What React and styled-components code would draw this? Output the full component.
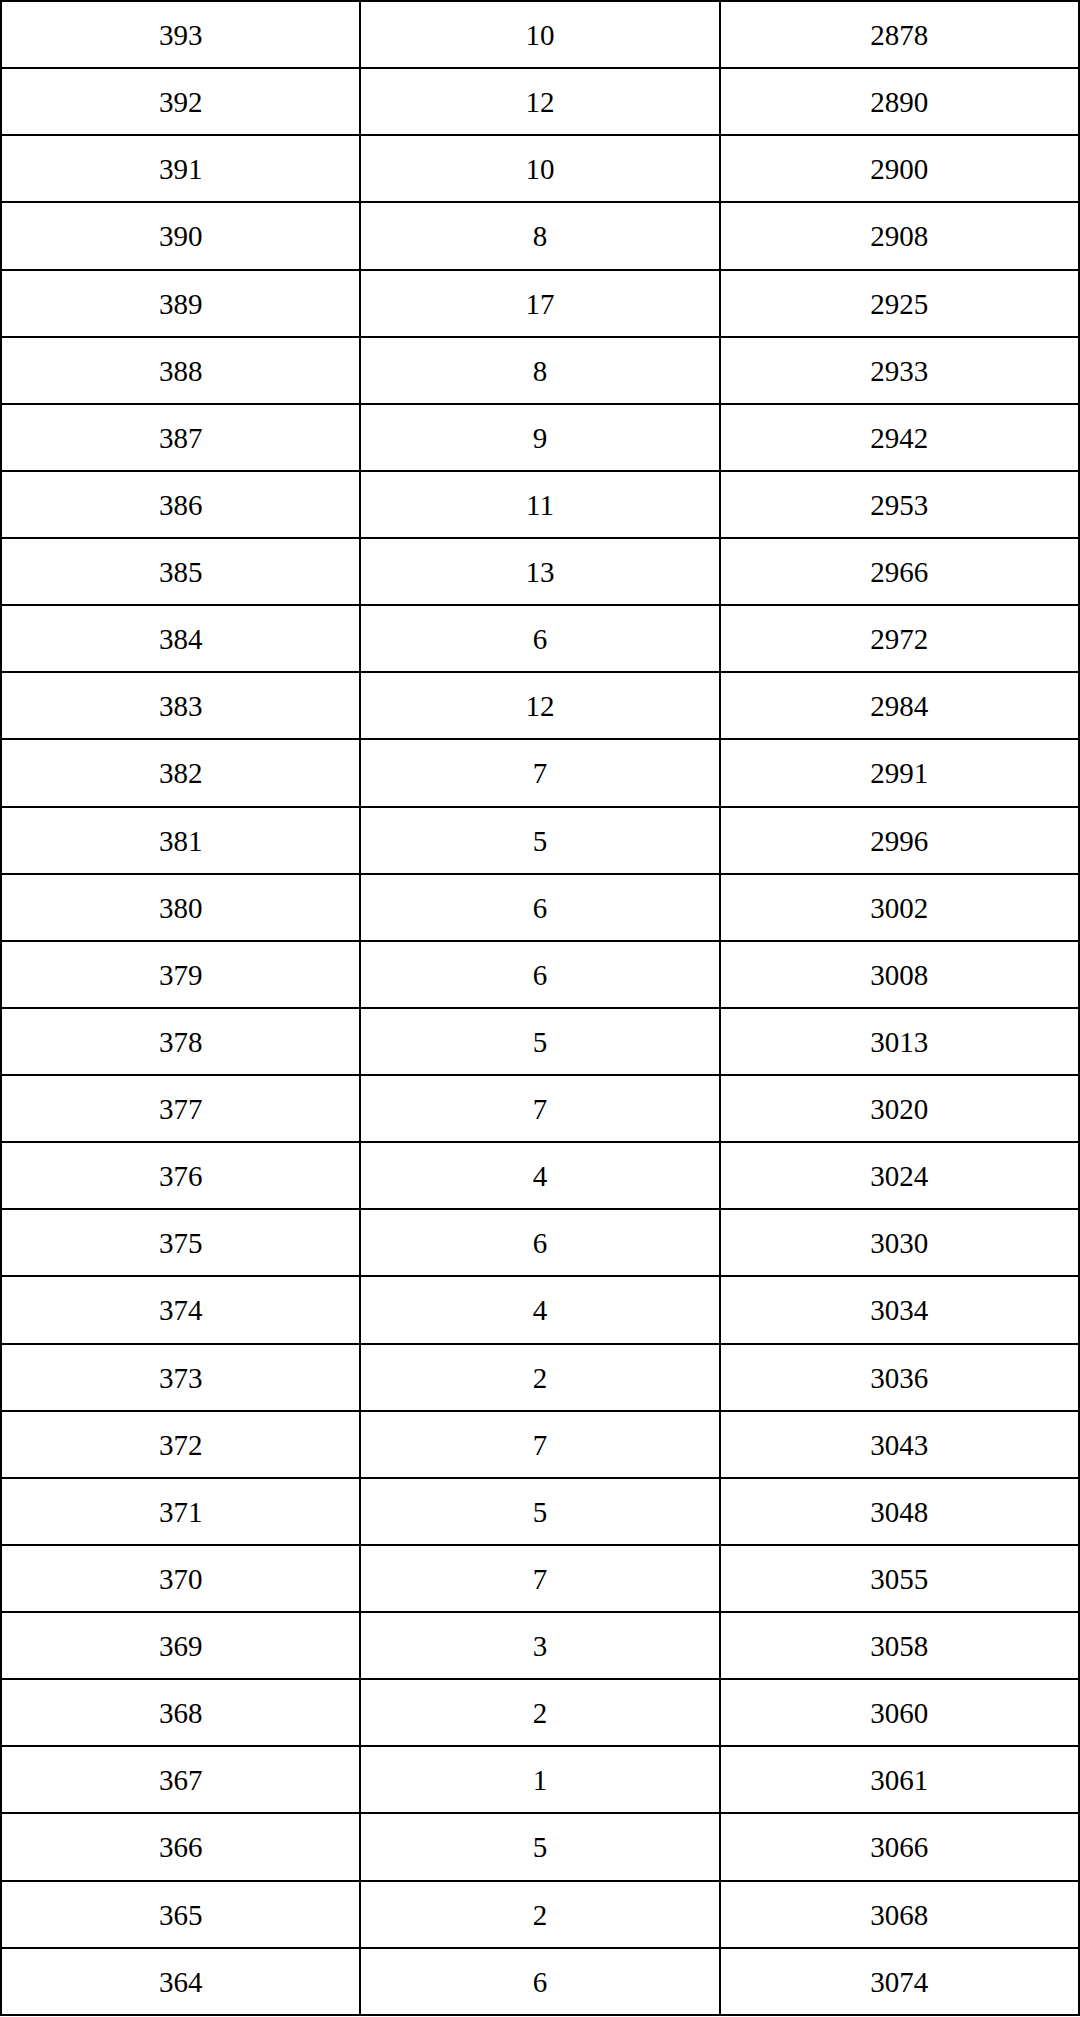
import styled, { createGlobalStyle } from "styled-components";

const GlobalStyle = createGlobalStyle`
  html, body {
    margin: 0;
    padding: 0;
    background: #fff;
  }
`;

const rows = [
  [393, 10, 2878], [392, 12, 2890], [391, 10, 2900], [390, 8, 2908],
  [389, 17, 2925], [388, 8, 2933], [387, 9, 2942], [386, 11, 2953],
  [385, 13, 2966], [384, 6, 2972], [383, 12, 2984], [382, 7, 2991],
  [381, 5, 2996], [380, 6, 3002], [379, 6, 3008], [378, 5, 3013],
  [377, 7, 3020], [376, 4, 3024], [375, 6, 3030], [374, 4, 3034],
  [373, 2, 3036], [372, 7, 3043], [371, 5, 3048], [370, 7, 3055],
  [369, 3, 3058], [368, 2, 3060], [367, 1, 3061], [366, 5, 3066],
  [365, 2, 3068], [364, 6, 3074],
];

const Table = styled.table`
  width: 1080px;
  height: 2016px;
  border-collapse: collapse;
  table-layout: fixed;
  border: 2px solid #000;
`;

const Row = styled.tr`
  height: 67px;
`;

const Cell = styled.td`
  width: 33.333%;
  border: 2px solid #000;
  padding: 2px 0 0;
  text-align: center;
  vertical-align: middle;
  font-family: "Liberation Serif", "Noto Sans CJK SC", serif;
  font-size: 29px;
  color: #000;
`;

const App = () => {
  return (
    <>
      <GlobalStyle />
      <Table>
        <tbody>
          {rows.map((r) => (
            <Row key={r[0]}>
              {r.map((v, i) => (
                <Cell key={i}>{v}</Cell>
              ))}
            </Row>
          ))}
        </tbody>
      </Table>
    </>
  );
};

export default App;
